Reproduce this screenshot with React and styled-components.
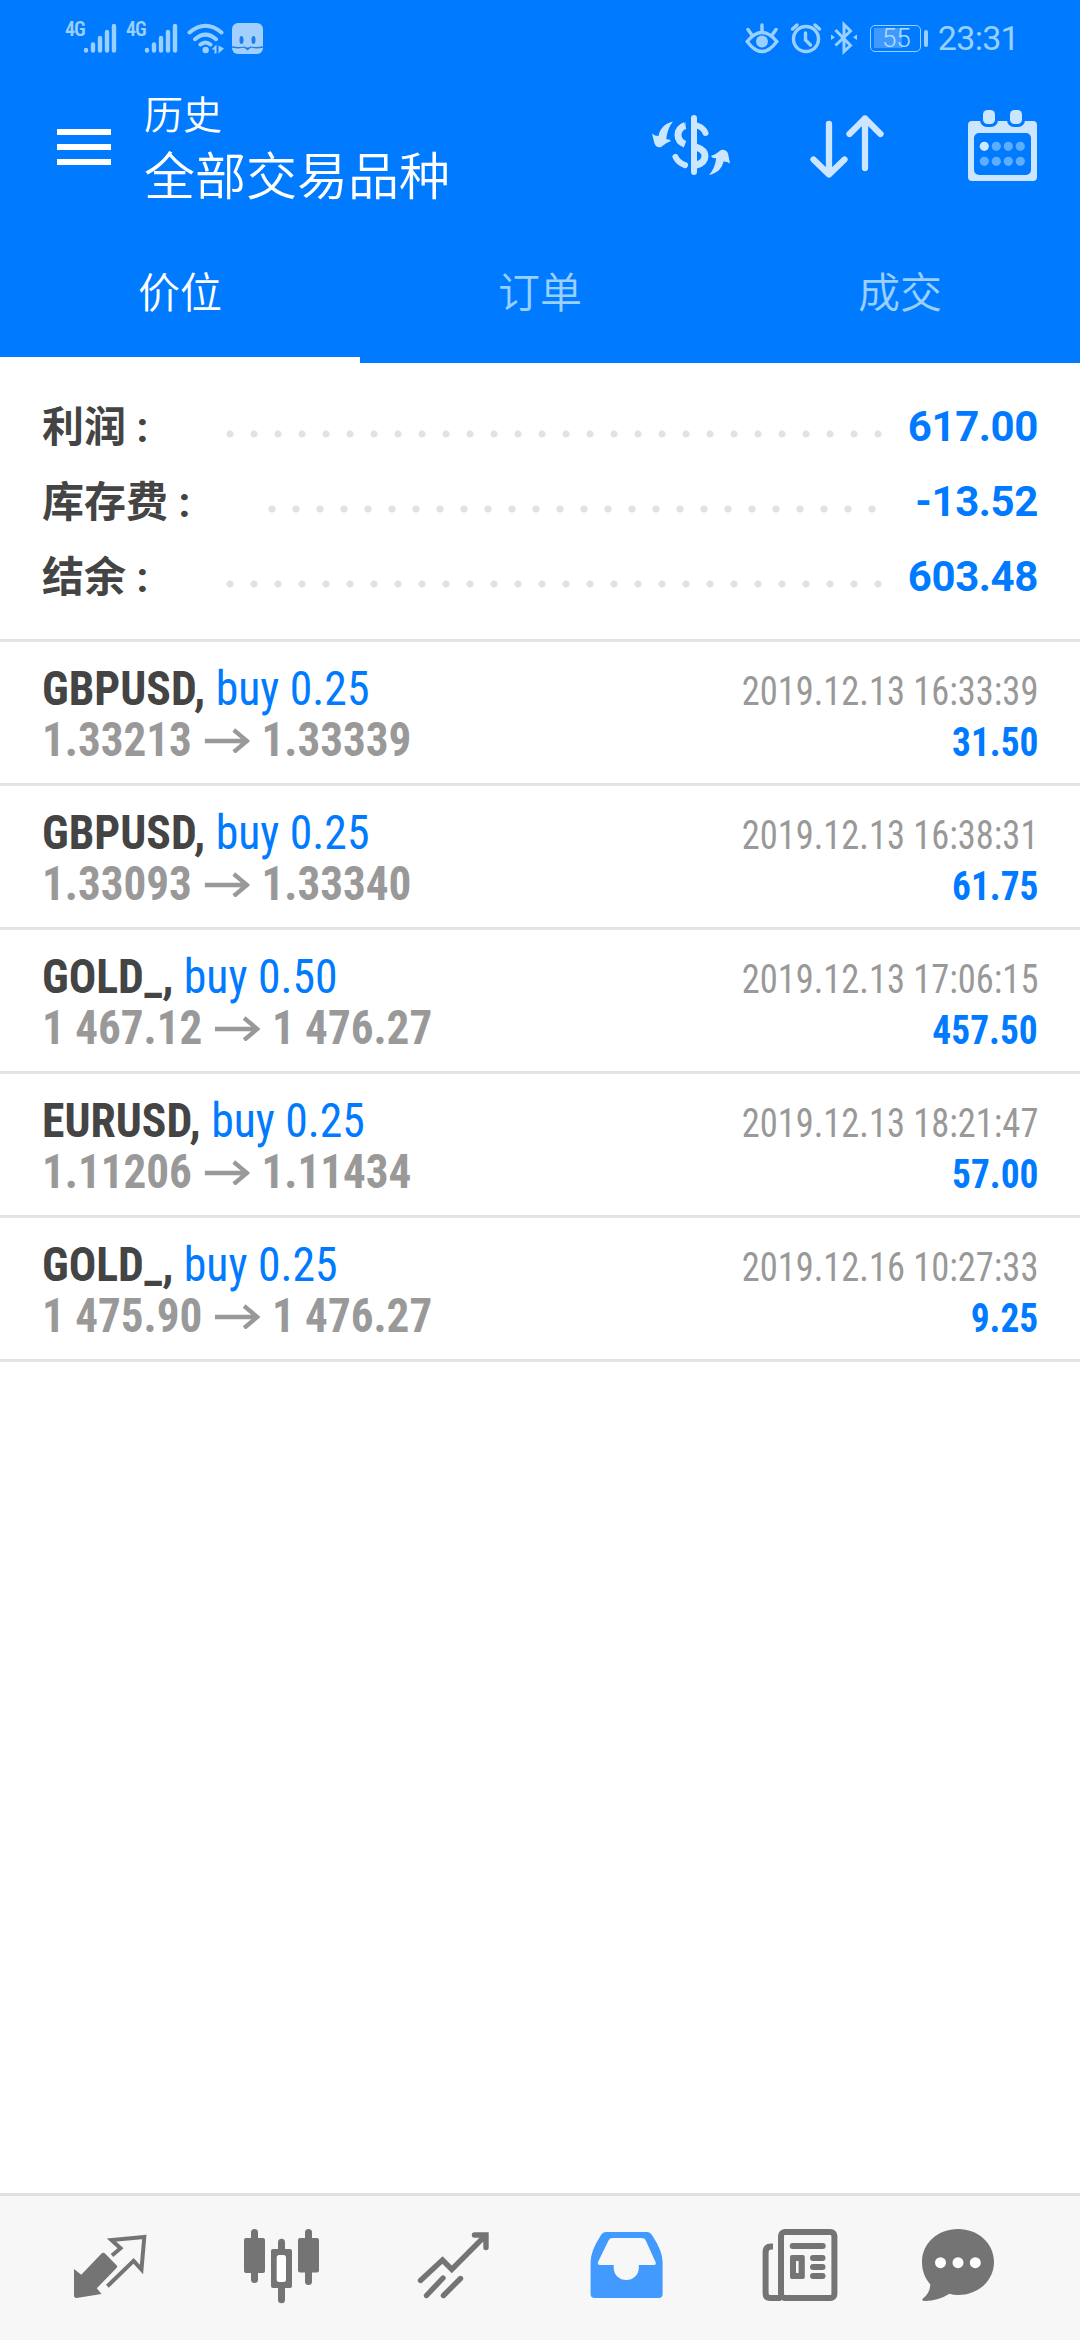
import styled, { createGlobalStyle } from "styled-components";

const summary = [
    { label: "利润", value: "617.00", dots: 28, end: 157 },
    { label: "库存费", value: "-13.52", dots: 26, end: 163 },
    { label: "结余", value: "603.48", dots: 28, end: 157 },
];

const deals = [
    { symbol: "GBPUSD,", side: "buy 0.25", from: "1.33213", to: "1.33339", time: "2019.12.13 16:33:39", profit: "31.50" },
    { symbol: "GBPUSD,", side: "buy 0.25", from: "1.33093", to: "1.33340", time: "2019.12.13 16:38:31", profit: "61.75" },
    { symbol: "GOLD_,", side: "buy 0.50", from: "1 467.12", to: "1 476.27", time: "2019.12.13 17:06:15", profit: "457.50" },
    { symbol: "EURUSD,", side: "buy 0.25", from: "1.11206", to: "1.11434", time: "2019.12.13 18:21:47", profit: "57.00" },
    { symbol: "GOLD_,", side: "buy 0.25", from: "1 475.90", to: "1 476.27", time: "2019.12.16 10:27:33", profit: "9.25" },
];

const tabs = ["价位", "订单", "成交"];

const SignalIcon = () => (
    <svg width="34" height="34" viewBox="0 0 34 34" stroke="currentColor" strokeWidth="4.4" strokeLinecap="round">
        <path d="M3 29.5v-.6M10 29.5v-6M17 29.5v-12.5M24 29.5v-18.5M31 29.5v-24.5" />
    </svg>
);

const WifiIcon = () => (
    <svg width="38" height="34" viewBox="0 0 38 34" fill="none" stroke="currentColor" strokeWidth="4" strokeLinecap="round">
        <path d="M2.5 11.5Q18.500 -2 34.500 11.500M8 18.200Q18.500 9 29 18.200M13.500 23.500Q18.500 19.500 23.500 23.500" />
        <circle cx="18.700" cy="29" r="3.200" fill="currentColor" stroke="none" />
        <path d="M24.500 28.500l5-5v9h-2v-4zM31.500 24.500l5.500 3-5.500 5z" fill="currentColor" stroke="none" />
    </svg>
);

const FaceIcon = () => (
    <svg width="31" height="31" viewBox="0 0 31 31">
        <rect width="31" height="31" rx="6" fill="#a3cfff" />
        <ellipse cx="9.500" cy="17" rx="2" ry="4" fill="#1a7fe8" />
        <ellipse cx="21.500" cy="17" rx="2" ry="4" fill="#1a7fe8" />
        <path d="M0 24q7 1.500 12 0l3.500 2 3.500-2q5 1.500 12 0" fill="none" stroke="#1a7fe8" strokeWidth="1.300" />
        <path d="M12.500 24.500h6l-3 3z" fill="#1a7fe8" />
    </svg>
);

const EyeIcon = () => (
    <svg width="34" height="34" viewBox="0 0 34 34" fill="none" stroke="currentColor" strokeWidth="3.400" strokeLinecap="round">
        <path d="M2.200 20.500Q9.500 11.500 17 11.500T31.800 20.500Q24.500 30.500 17 30.500T2.200 20.500z" />
        <circle cx="17" cy="20.500" r="6" fill="currentColor" stroke="none" />
        <path d="M17 4v6M3 8.500l3.500 5M31 8.500l-3.500 5" />
    </svg>
);

const AlarmIcon = () => (
    <svg width="32" height="34" viewBox="0 0 32 34" fill="none" stroke="currentColor" strokeWidth="3.400" strokeLinecap="round">
        <circle cx="16" cy="18" r="12.500" />
        <path d="M15.500 12v7l5 5M2.500 8l4.500-4M29.500 8l-4.500-4" />
    </svg>
);

const BluetoothIcon = () => (
    <svg width="26" height="34" viewBox="0 0 26 34" fill="none" stroke="currentColor" strokeWidth="3">
        <path d="M4.500 9l15 15.500-6.500 6V3.500l6.500 6.500-15 14.500" />
        <path d="M0 13.500v5.500l4-2.700zM26 13.500v5.500l-4-2.700z" fill="currentColor" stroke="none" />
    </svg>
);

const DollarIcon = () => (
    <svg width="84" height="72" viewBox="0 0 84 72" fill="none" stroke="currentColor" strokeWidth="7">
        <path d="M36 17.500C31 19.500 29 23 29 27S31.500 34.500 36 36.200" />
        <path d="M48 17.500Q54.500 19.500 56.500 25M26.500 49Q29.500 55 36 57.200M45 10v54" strokeWidth="6" strokeLinecap="round" />
        <path d="M47 39C53 41 56 44 56 48S53 55.500 47 57.200" />
        <path d="M47 16v6M36 14.500v6" strokeWidth="1" />
        <path d="M24 13.500C15.500 15.500 11 20.500 9.500 28Q5.500 28 3 25.500L5.500 35.500Q7 40 12 39Q17 34.500 22 33Q21 31 17.200 31.300C18 24 20 18.500 24 13.500z" fill="currentColor" stroke="none" />
        <path d="M60 67C68.500 65 73 60.500 74.500 53.500Q78.500 53.500 81 55.500L79 45.500Q77 41 72 42Q67 46.500 62 48Q63 50.500 67.200 50.200C66.500 57 64 62.500 60 67z" fill="currentColor" stroke="none" />
    </svg>
);

const SortIcon = () => (
    <svg width="80" height="72" viewBox="0 0 80 72" fill="none" stroke="currentColor" strokeWidth="6.300" strokeLinecap="round" strokeLinejoin="round">
        <path d="M22 16v50M6.500 51.500L22 66.500l15.500-15M58 60V10.500M42.500 26L58 10.500 73.500 26" />
    </svg>
);

const CalendarIcon = () => (
    <svg width="72" height="76" viewBox="0 0 72 76">
        <path fillRule="evenodd" fill="currentColor" d="M6 13h61a4 4 0 0 1 4 4v52a4 4 0 0 1-4 4H6a4 4 0 0 1-4-4V17a4 4 0 0 1 4-4zM13 25a5 5 0 0 0-5 5v32a5 5 0 0 0 5 5h47a5 5 0 0 0 5-5V30a5 5 0 0 0-5-5z" />
        {[17, 44].map((x) => (
            <g key={x}>
                <rect x={x - 3} y="-1" width="18" height="20" rx="7" fill="#007aff" />
                <rect x={x} y="2" width="12" height="14" rx="4.500" fill="currentColor" />
            </g>
        ))}
        {[38.3, 53.3].map((y) =>
            [18.3, 30.3, 42.3, 54.3].map((x) => (
                <circle key={`${x}-${y}`} cx={x} cy={y} r="4.600" fill={x < 20 && y < 40 ? "#cce9ff" : "#5fadff"} />
            ))
        )}
    </svg>
);

const QuotesIcon = () => (
    <>
        <path d="M12 49L19.300 54.700 39.500 33.500Q41.300 32 43 33.500L55 45.700Q55.500 47 54.500 48L34.800 68.300 39.500 74 14.500 78Q12 78 12 76z" />
        <path d="M50 35.500L58.500 28.300 49.500 20 82.300 17 79.500 49.500 71.600 40.800 45.400 66.300" fill="none" stroke="currentColor" strokeWidth="4" />
    </>
);

const CandlesIcon = () => (
    <>
        <rect x="10" y="18" width="21" height="35" rx="2" />
        <rect x="17" y="9" width="7" height="54" rx="3.500" />
        <rect x="64" y="18" width="21" height="34.500" rx="2" />
        <rect x="71" y="9" width="7" height="56" rx="3.500" />
        <rect x="37" y="29" width="21" height="39" rx="2" />
        <rect x="44" y="18.700" width="7" height="64.500" rx="3.500" />
        <rect x="42.700" y="35" width="9.300" height="27" rx="2.500" fill="#fff" />
    </>
);

const TrendIcon = () => (
    <g fill="none" stroke="currentColor" strokeWidth="5.400" strokeLinecap="round">
        <path d="M14.500 60.500L36.500 40l9.300 9.500L79 16M68.500 15h11.500v12.500M20.500 75.500l16.500-17.500M37.500 75.500l17-17" />
    </g>
);

const InboxIcon = () => (
    <path fillRule="evenodd" d="M27.500 12h42Q72 12 74 15Q84.600 31 84.600 42V74Q84.600 78 80.600 78h-64Q12.600 78 12.600 74V42Q12.600 31 23 15Q25 12 27.500 12zM34.500 18Q31.500 18 30.300 21L20 42Q19 45 22 45H35.700V48a12.500 12 0 0 0 25.100 0V45H75.500Q78.700 45 77.500 42L68 21Q67 18 63.500 18z" />
);

const NewsIcon = () => (
    <>
        <path d="M23 26.500H21Q15.600 26.500 15.600 32V73Q15.600 78 20 78H31" fill="none" stroke="currentColor" strokeWidth="6" />
        <rect x="31" y="12" width="53.400" height="66" rx="4" fill="none" stroke="currentColor" strokeWidth="6" />
        <rect x="39.700" y="23" width="36" height="6" rx="3" />
        <path fillRule="evenodd" d="M42 35h10.800q2 0 2 2v20q0 2-2 2H42q-2 0-2-2V37q0-2 2-2zM46 41v12h2.600V41z" />
        <rect x="60" y="35" width="15.500" height="6" rx="3" />
        <rect x="60" y="44" width="15.500" height="6" rx="3" />
        <rect x="60" y="53" width="15.500" height="6" rx="3" />
    </>
);

const ChatIcon = () => (
    <>
        <path d="M36 9C56 9 72 23 72 42S56 75 36 75Q31 75 27.500 73.800Q16 81 3 81Q-1 81 1 78.500Q8 73 8.300 64.500C3 58 0 51 0 42C0 23 16 9 36 9z" />
        <circle cx="18.500" cy="42.700" r="5.500" fill="#fff" />
        <circle cx="36" cy="42.700" r="5.500" fill="#fff" />
        <circle cx="53.300" cy="42.700" r="5.500" fill="#fff" />
    </>
);

const navItems = [
    { name: "quotes", Icon: QuotesIcon },
    { name: "charts", Icon: CandlesIcon },
    { name: "trade", Icon: TrendIcon },
    { name: "history", Icon: InboxIcon, active: true },
    { name: "news", Icon: NewsIcon },
    { name: "messages", Icon: ChatIcon },
];

const App = () => {
    return (
        <>
        <GlobalStyle />
        <Screen>
            <Header>
                <StatusBar>
                    <StatusGroup>
                        <Network><NetworkLabel>4G</NetworkLabel><SignalIcon /></Network>
                        <Network><NetworkLabel>4G</NetworkLabel><SignalIcon /></Network>
                        <WifiIcon />
                        <FaceSlot><FaceIcon /></FaceSlot>
                    </StatusGroup>
                    <StatusGroup>
                        <EyeIcon />
                        <AlarmSlot><AlarmIcon /></AlarmSlot>
                        <BluetoothIcon />
                        <Battery><BatteryBody>55</BatteryBody><BatteryCap /></Battery>
                        <Clock>23:31</Clock>
                    </StatusGroup>
                </StatusBar>
                <Toolbar>
                    <MenuButton aria-label="menu"><MenuBar /><MenuBar /><MenuBar /></MenuButton>
                    <Titles>
                        <Title>历史</Title>
                        <Subtitle>全部交易品种</Subtitle>
                    </Titles>
                    <Actions>
                        <DollarIcon />
                        <SortIcon />
                        <CalendarIcon />
                    </Actions>
                </Toolbar>
                <Tabs>
                    {tabs.map((tab, i) => (
                        <Tab key={tab} $active={i === 0}>{tab}</Tab>
                    ))}
                </Tabs>
            </Header>
            <Summary>
                {summary.map((row) => (
                    <SummaryRow key={row.label}>
                        <Label>{row.label} :</Label>
                        <Leader $count={row.dots} $end={row.end} />
                        <Amount>{row.value}</Amount>
                    </SummaryRow>
                ))}
            </Summary>
            <List>
                {deals.map((deal) => (
                    <Deal key={deal.time}>
                        <DealLine>
                            <Symbol>{deal.symbol} <Side>{deal.side}</Side></Symbol>
                            <Time>{deal.time}</Time>
                        </DealLine>
                        <DealLine>
                            <Prices>
                                <Price>{deal.from}</Price>
                                <svg width="48" height="26" viewBox="0 0 48 26" fill="none" stroke="currentColor" strokeWidth="4.500">
                                    <path d="M0 14h45M31 3L45 14 31 25" />
                                </svg>
                                <Price>{deal.to}</Price>
                            </Prices>
                            <Profit>{deal.profit}</Profit>
                        </DealLine>
                    </Deal>
                ))}
            </List>
            <BottomNav>
                {navItems.map(({ name, Icon, active }) => (
                    <NavItem key={name} aria-label={name} $active={active}>
                        <svg width="96" height="96" viewBox="0 0 96 96" fill="currentColor"><Icon /></svg>
                    </NavItem>
                ))}
            </BottomNav>
        </Screen>
        </>
    )
};

const GlobalStyle = createGlobalStyle`
* {
    box-sizing: border-box;
}
body {
    margin: 0;
    font-family: Roboto, "Noto Sans CJK SC", sans-serif;
}
svg {
    display: block;
    flex: none;
}
`
const Screen = styled.div`
display: flex;
flex-direction: column;
width: 1080px;
height: 2340px;
background: #fff;
overflow: hidden;
`
const Header = styled.header`
height: 363px;
background: #007aff;
color: #fff;
`
const StatusBar = styled.div`
display: flex;
justify-content: space-between;
height: 76px;
padding: 0 61px 0 65px;
color: #99d0ff;
`
const StatusGroup = styled.div`
display: flex;
align-items: center;
`
const Network = styled.div`
display: flex;
width: 61px;
`
const NetworkLabel = styled.span`
width: 18px;
font-family: "Roboto Condensed", Roboto, sans-serif;
font-size: 20px;
font-weight: 600;
line-height: 17px;
letter-spacing: -1px;
`
const FaceSlot = styled.div`
margin-left: 7px;
`
const AlarmSlot = styled.div`
margin: 0 9px 0 11px;
`
const Battery = styled.div`
display: flex;
align-items: center;
gap: 3px;
margin: 0 10px 0 13px;
`
const BatteryBody = styled.div`
display: flex;
align-items: center;
justify-content: center;
width: 51px;
height: 27px;
border: 1.5px solid #99d0ff;
border-radius: 5px;
padding-left: 2px;
font-size: 26px;
font-weight: 300;
color: #b3dcff;
background: linear-gradient(#4099ff, #4099ff) 3px center / 28px 20px no-repeat;
`
const BatteryCap = styled.div`
width: 4px;
height: 17px;
border-radius: 2px;
background: #99d0ff;
`
const Clock = styled.span`
font-size: 34px;
letter-spacing: -0.7px;
`
const Toolbar = styled.div`
display: flex;
height: 144px;
padding: 0 42px 0 57px;
`
const MenuButton = styled.button`
display: flex;
flex-direction: column;
gap: 9px;
width: 54px;
padding: 53px 0 0;
border: 0;
background: none;
`
const MenuBar = styled.span`
height: 6px;
background: #fff;
`
const Titles = styled.div`
flex: 1;
padding: 13px 0 0 33px;
font-weight: 350;
`
const Title = styled.div`
font-size: 39px;
line-height: 54px;
`
const Subtitle = styled.h1`
margin: 0;
font-size: 51px;
font-weight: 350;
line-height: 69px;
`
const Actions = styled.div`
display: flex;
align-items: flex-start;
padding-top: 32px;
color: #cce6ff;

svg:nth-child(2) {
    margin: 0 79px 0 74px;
}
`
const Tabs = styled.nav`
display: grid;
grid-template-columns: repeat(3, 1fr);
height: 143px;
`
const Tab = styled.div`
display: flex;
align-items: center;
justify-content: center;
padding-top: 1px;
font-size: 42px;
font-weight: 350;
color: ${({ $active }) => ($active ? "#fff" : "#99d0ff")};
border-bottom: 6px solid ${({ $active }) => ($active ? "#fff" : "transparent")};
`
const Summary = styled.section`
height: 279px;
padding: 26px 42px 0;
border-bottom: 3px solid #e3e3e3;
`
const SummaryRow = styled.div`
display: flex;
align-items: center;
height: 75px;
font-size: 42px;
`
const Label = styled.span`
margin-top: -6px;
font-weight: 700;
color: #444;
`
const Leader = styled.span`
width: ${({ $count }) => $count * 24}px;
height: 8px;
margin: 14px ${({ $end }) => $end - 157 + 15}px 0 auto;
background: radial-gradient(circle, #e2e2e2 3.2px, transparent 4px) 0 0 / 24px 8px;
`
const Amount = styled.span`
width: 133px;
font-weight: 700;
letter-spacing: -0.4px;
text-align: right;
color: #007aff;
`
const List = styled.main`
flex: 1;
`
const Deal = styled.article`
height: 144px;
padding: 21px 42px 0;
border-bottom: 3px solid #e3e3e3;
font-family: "Roboto Condensed", Roboto, sans-serif;
`
const DealLine = styled.div`
display: flex;
justify-content: space-between;
align-items: baseline;
height: 51px;
line-height: 51px;
white-space: nowrap;
`
const Symbol = styled.span`
font-size: 48px;
font-weight: 700;
color: #444;
transform: scaleX(0.951);
transform-origin: left;
`
const Side = styled.span`
font-weight: 400;
color: #007aff;
`
const Prices = styled.span`
display: flex;
align-items: center;
gap: 13px;
color: #999;
transform: scaleX(0.94);
transform-origin: left;
`
const Price = styled.span`
font-size: 48px;
font-weight: 700;
`
const Time = styled.span`
font-size: 40px;
color: #999;
transform: scaleX(0.912);
transform-origin: right;
`
const Profit = styled.span`
font-size: 40px;
font-weight: 700;
color: #007aff;
transform: scaleX(0.935);
transform-origin: right;
`
const BottomNav = styled.footer`
display: flex;
height: 147px;
padding: 0 24px;
border-top: 3px solid #e0e0e0;
background: #f7f7f7;
`
const NavItem = styled.button`
display: flex;
align-items: center;
justify-content: center;
flex: 1;
padding: 0;
border: 0;
background: none;
color: ${({ $active }) => ($active ? "#429aff" : "#747474")};
`

export default App;
